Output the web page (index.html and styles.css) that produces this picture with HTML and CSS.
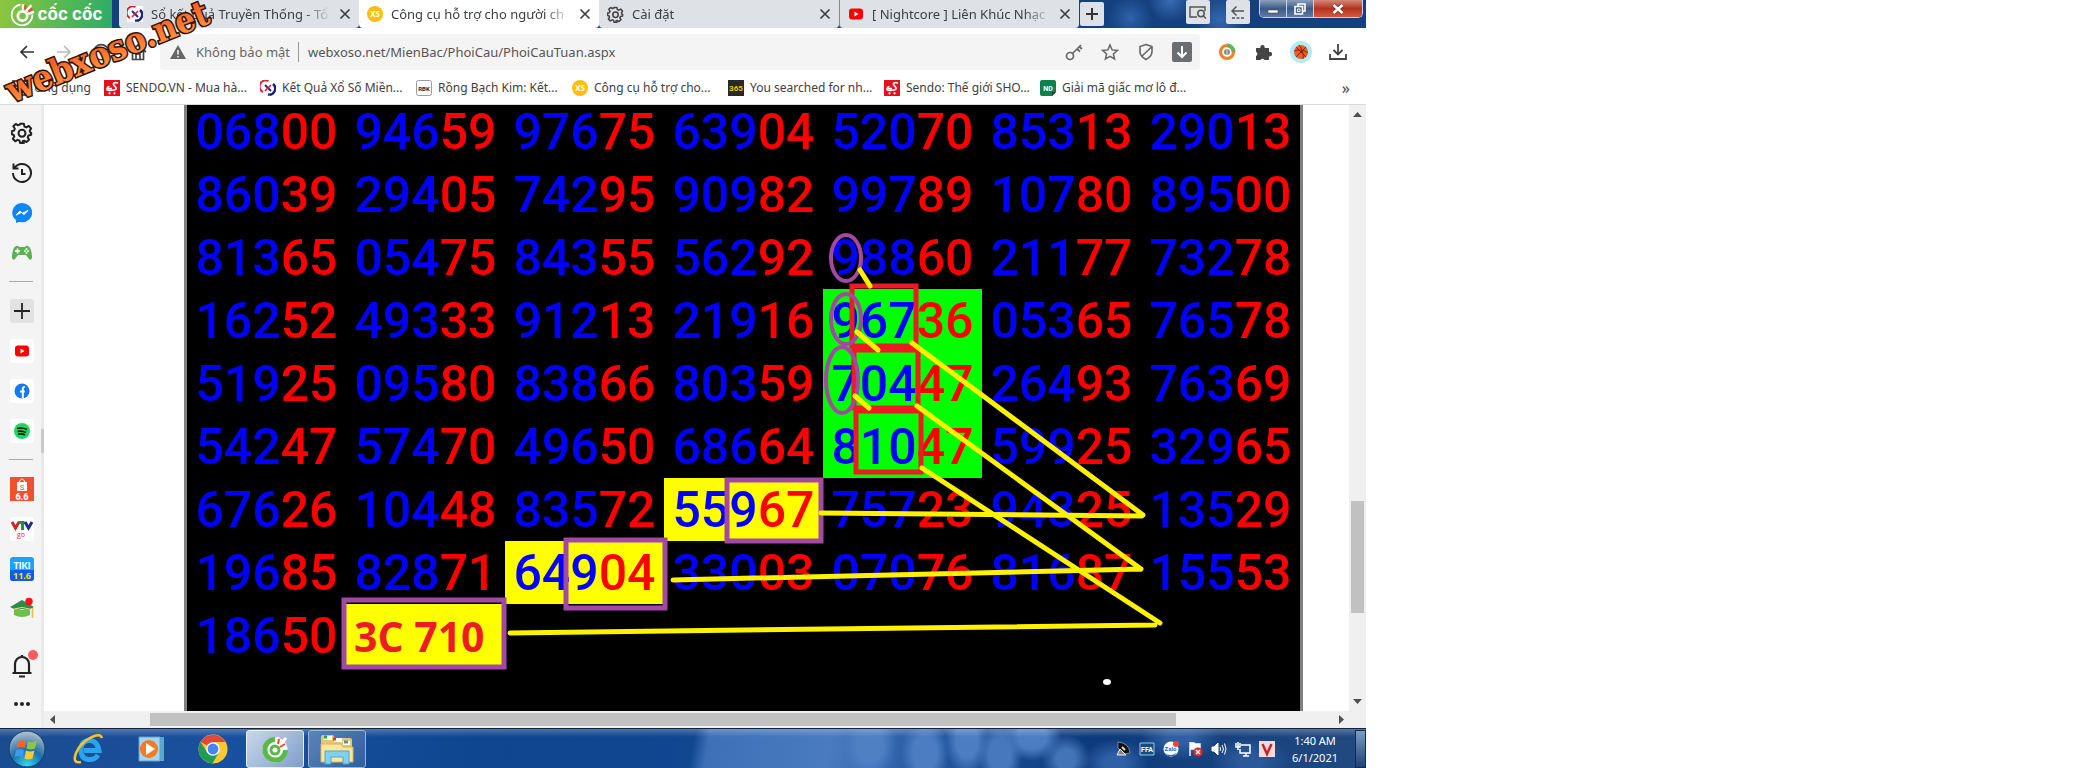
FILE: index.html
```html
<!DOCTYPE html>
<html lang="vi">
<head>
    <meta charset="UTF-8">
    <meta name="viewport" content="width=device-width, initial-scale=1.0">
    <title>Công cụ hỗ trợ cho người chơi</title>
    <link rel="stylesheet" href="styles.css">
</head>
<body>
    <!-- Shared icons -->
    <svg class="sprite" aria-hidden="true">
        <symbol id="i-close" viewBox="0 0 12 12"><path d="M1.500 1.500l9 9M10.500 1.500l-9 9" fill="none" stroke="#3c4043" stroke-width="1.700"/></symbol>
        <symbol id="i-gear" viewBox="0 0 24 24"><path d="M10 2h4l.7 3 2 .9 2.700-1.600 2.500 2.800-1.500 2.500.8 2 .8.400V14l-3 .8-.8 1.900 1.500 2.700-2.800 2.500-2.600-1.500-1.600.6L14 23h-4l-.8-2.700-1.900-.8-2.700 1.500-2.600-2.700 1.600-2.500-.8-1.900-2-.6V10l2.500-.6.9-2.100L2.500 4.600l2.700-2.500 2.500 1.500 1.800-.7z" fill="none" stroke="currentColor" stroke-width="2.200" stroke-linejoin="round"/><circle cx="12" cy="12.300" r="3.800" fill="none" stroke="currentColor" stroke-width="2.200"/></symbol>
        <symbol id="i-kq" viewBox="0 0 16 16"><path d="M8.500 1A6 6 0 1 0 3 12" fill="none" stroke="#e2202c" stroke-width="2"/><path d="M8 14.500A6 6 0 0 0 13 4" fill="none" stroke="#20207c" stroke-width="2.400"/><path d="M5 5l6 6" stroke="#20207c" stroke-width="1.800"/><path d="M11 5l-6 6" stroke="#e2202c" stroke-width="1.600"/></symbol>
        <symbol id="i-xs" viewBox="0 0 16 16"><circle cx="8" cy="8" r="8" fill="#ffbe0b"/><text x="8" y="11" text-anchor="middle" font-family="Open Sans, sans-serif" font-weight="700" font-size="8" fill="#fff">XS</text></symbol>
        <symbol id="i-yt" viewBox="0 0 16 16"><rect x="1" y="2.500" width="14" height="11" rx="3" fill="#f00"/><path d="M6.500 5.500v5l4-2.500z" fill="#fff"/></symbol>
        <symbol id="i-sendo" viewBox="0 0 16 16"><path d="M0 0h16v16H0z" fill="#e5101d"/><path d="M14 3c-3-1-5 0-4.500 1.500S13 7 12 9c-1 1.500-3 1.500-8 1.300C2 10 3 6.500 5.500 6.500M4 8.500h4" fill="none" stroke="#fff" stroke-width="1.600"/><circle cx="5.500" cy="13.300" r="1.100" fill="#fff"/><circle cx="10.500" cy="13.300" r="1.100" fill="#fff"/></symbol>
        <symbol id="i-coc" viewBox="0 0 24 24"><path d="M10 2.500A10 10 0 1 0 21.500 12" fill="none" stroke="currentColor" stroke-width="1.600"/><circle cx="12" cy="13.500" r="4.500" fill="none" stroke="currentColor" stroke-width="2.600"/><path d="M12.500 7.500V2M15.500 9l5-6M17.500 11.500l5.500-2" stroke="currentColor" stroke-width="2.400"/><path d="M15 3l-.8 4M21.500 6l-3.700 3" stroke="#f0492e" stroke-width="2"/></symbol>
    </svg>

    <div class="desktop">
        <!-- Tabs -->
        <header class="tab-bar">
            <button class="brand"><svg width="25" height="25"><use href="#i-coc"/></svg>cốc cốc</button>
            <div class="tab">
                <svg width="16" height="16"><rect width="16" height="16" fill="#fff"/><use href="#i-kq"/></svg>
                <a href="#">Sổ kết quả Truyền Thống - Tổ</a>
                <button aria-label="Đóng"><svg width="12" height="12"><use href="#i-close"/></svg></button>
            </div>
            <div class="tab tab-active">
                <svg width="16" height="16"><use href="#i-xs"/></svg>
                <a href="#">Công cụ hỗ trợ cho người ch</a>
                <button aria-label="Đóng"><svg width="12" height="12"><use href="#i-close"/></svg></button>
            </div>
            <div class="tab">
                <svg class="dark" width="17" height="17"><use href="#i-gear"/></svg>
                <a href="#">Cài đặt</a>
                <button aria-label="Đóng"><svg width="12" height="12"><use href="#i-close"/></svg></button>
            </div>
            <div class="tab tab-split">
                <svg width="16" height="16"><use href="#i-yt"/></svg>
                <a href="#">[ Nightcore ] Liên Khúc Nhạc</a>
                <button aria-label="Đóng"><svg width="12" height="12"><use href="#i-close"/></svg></button>
            </div>
            <button class="strip-btn new-tab" aria-label="Thẻ mới"><svg width="14" height="14"><path d="M7 1v12M1 7h12" stroke="#333" stroke-width="2"/></svg></button>
            <div class="strip-tools">
                <button class="strip-btn" aria-label="Tìm thẻ"><svg width="18" height="14" fill="none" stroke="#555" stroke-width="1.500"><path d="M8 12H1V2h15v4"/><circle cx="12" cy="8.500" r="3.200"/><path d="M14.500 11l2.500 2.500"/></svg></button>
                <button class="strip-btn" aria-label="Quay lại"><svg width="14" height="14" fill="none" stroke="#555" stroke-width="1.500"><path d="M13 6H1M5.500 1.500L1 6l4.500 4.500"/><path d="M1 13h12" stroke-dasharray="3 1.500"/></svg></button>
            </div>
            <div class="win-ctl">
                <button aria-label="Thu nhỏ"><svg width="12" height="12"><rect x="1" y="7" width="10" height="3" fill="#fff" stroke="#444" stroke-width=".6"/></svg></button>
                <button aria-label="Khôi phục"><svg width="12" height="12" fill="none" stroke="#fff" stroke-width="1.600"><path d="M4 3V1h7v7H9"/><path d="M1 3.500h7.500V11H1z"/><path d="M3.500 6h2.500v2.500H3.500z" stroke-width="1"/></svg></button>
                <button class="win-close" aria-label="Đóng"><svg width="12" height="12"><path d="M1.500 2l9 8M10.500 2l-9 8" stroke="#633" stroke-width="4"/><path d="M1.500 2l9 8M10.500 2l-9 8" stroke="#fff" stroke-width="2.600"/></svg></button>
            </div>
        </header>

        <!-- Address bar -->
        <nav class="toolbar">
            <div class="nav-btns">
                <button aria-label="Lùi"><svg width="16" height="16" fill="none" stroke="#333" stroke-width="1.700"><path d="M15 8H2M8 2L2 8l6 6"/></svg></button>
                <button aria-label="Tiến"><svg width="16" height="16" fill="none" stroke="#bbb" stroke-width="1.700"><path d="M1 8h13M8 2l6 6-6 6"/></svg></button>
                <button aria-label="Tải lại"><svg width="18" height="18" fill="none" stroke="#444" stroke-width="1.700"><path d="M16 6A7.500 7.500 0 1 0 16.500 11M16.500 1v5.500H11"/></svg></button>
                <button aria-label="Trang chủ"><svg width="18" height="18" fill="none" stroke="#444" stroke-width="1.700"><path d="M1 9l8-7 8 7M3.500 8v8.500h11V8M7 16v-5h4v5"/></svg></button>
            </div>
            <div class="address">
                <svg width="16" height="14"><path d="M8 0l8 14H0z" fill="#666"/><path d="M8 5v4.500M8 11v1.500" stroke="#f4f4f4" stroke-width="1.600"/></svg>
                <label for="url">Không bảo mật</label>
                <input id="url" type="text" value="webxoso.net/MienBac/PhoiCau/PhoiCauTuan.aspx">
                <button aria-label="Mật khẩu"><svg width="18" height="18" fill="none" stroke="#666" stroke-width="1.700"><circle cx="5" cy="13" r="3.500"/><path d="M7.500 10.500L16 2M12 6l3 2.500M14 3.500L17 6"/></svg></button>
                <button aria-label="Đánh dấu"><svg width="18" height="18" fill="none" stroke="#666" stroke-width="1.500"><path d="M9 2l2.100 4.900 5.200.5-3.900 3.500 1.200 5.100L9 13.300 4.400 16l1.200-5.100L1.700 7.400l5.200-.5z"/></svg></button>
                <button aria-label="Chặn quảng cáo"><svg width="18" height="18" fill="none" stroke="#666" stroke-width="1.600"><path d="M9 1.500l6 2v5c0 4-3 6.500-6 8-3-1.500-6-4-6-8v-5zM4.500 13.500L14.500 4"/></svg></button>
                <button aria-label="Tải video"><svg width="20" height="20"><rect width="20" height="20" rx="2" fill="#6b6e70"/><path d="M10 4v11M5.500 10.500L10 15l4.500-4.500" fill="none" stroke="#fff" stroke-width="2"/></svg></button>
            </div>
            <div class="ext-btns">
                <button aria-label="Tiết kiệm"><svg width="18" height="18" fill="none"><circle cx="9" cy="9" r="6.500" stroke="#f5821f" stroke-width="3.200"/><path d="M9 2.500a6.500 6.500 0 0 1 6.500 6.500" stroke="#5cb85c" stroke-width="4"/><circle cx="9" cy="9" r="3" fill="#888"/><path d="M9 6v6" stroke="#ddd"/></svg></button>
                <button aria-label="Tiện ích"><svg width="18" height="18"><path d="M1 5h4.500a2.200 2.200 0 1 1 4 0H14v4a2.300 2.300 0 1 1 0 4.300V17H9.500a2.200 2.200 0 0 0-4 0H1v-4a2.300 2.300 0 0 0 0-4.200z" fill="#444"/></svg></button>
                <button aria-label="Hồ sơ"><svg width="22" height="22"><circle cx="11" cy="11" r="11" fill="#b2ebf2"/><circle cx="11" cy="11" r="7" fill="#f05a28"/><path d="M6 6l10 10M16 6L6 16M9 4c3 4 5 9 4 14M4 10c5-2 10-1 14 2" fill="none" stroke="#6b2a14" stroke-width=".9"/></svg></button>
                <button aria-label="Tải xuống"><svg width="18" height="18" fill="none" stroke="#444" stroke-width="1.800"><path d="M9 1v10M4.500 7L9 11.500 13.500 7M1 11v5h16v-5"/></svg></button>
            </div>
        </nav>

        <!-- Bookmarks -->
        <nav class="bookmarks">
            <a class="apps" href="#"><svg width="16" height="16" fill="none" stroke="#555" stroke-width="1.800"><path d="M1 1h5v5H1zM10 1h5v5h-5zM1 10h5v5H1zM10 10h5v5h-5z"/></svg>Ứng dụng</a>
            <a href="#"><svg width="16" height="16"><use href="#i-sendo"/></svg>SENDO.VN - Mua hà...</a>
            <a href="#"><svg width="16" height="16"><use href="#i-kq"/></svg>Kết Quả Xổ Số Miền...</a>
            <a href="#"><svg width="16" height="16"><rect x=".5" y=".5" width="15" height="15" rx="2" fill="#fff" stroke="#99a"/><text x="8" y="11" text-anchor="middle" font-family="Roboto, sans-serif" font-weight="700" font-size="6" fill="#224">RBK</text></svg>Rồng Bạch Kim: Kết...</a>
            <a href="#"><svg width="16" height="16"><use href="#i-xs"/></svg>Công cụ hỗ trợ cho...</a>
            <a href="#"><svg width="16" height="16"><path d="M0 0h16v16H0z" fill="#292929"/><text x="8" y="11" text-anchor="middle" font-family="Roboto, sans-serif" font-weight="700" font-size="8" fill="#f4c400">365</text></svg>You searched for nh...</a>
            <a href="#"><svg width="16" height="16"><use href="#i-sendo"/></svg>Sendo: Thế giới SHO...</a>
            <a href="#"><svg width="16" height="16"><path d="M2 0h12q2 0 2 2v10l-4 4H2q-2 0-2-2V2q0-2 2-2z" fill="#0d8050"/><path d="M16 12h-4v4z" fill="#064d30"/><text x="8" y="11" text-anchor="middle" font-family="Roboto, sans-serif" font-weight="700" font-size="7" fill="#fff">ND</text></svg>Giải mã giấc mơ lô đ...</a>
            <button class="more">»</button>
        </nav>

        <main class="content">
            <!-- Side bar -->
            <aside class="sidebar">
                <button aria-label="Cài đặt"><svg width="22" height="22"><use href="#i-gear"/></svg></button>
                <button aria-label="Lịch sử"><svg width="22" height="22" fill="none" stroke="#222" stroke-width="2"><path d="M3.500 6A9 9 0 1 1 2 11M2.500 1.500v5h5M11 7v5h3.500"/></svg></button>
                <button aria-label="Messenger"><svg width="20" height="20"><path d="M10 0a10 9.500 0 0 1 0 19.300l-3-.4-3 1.100v-3A10 9.600 0 0 1 10 0z" fill="#0a86ff"/><path d="M4 12l4-4 2.500 2.200L16 7.500l-4 4.200L9.500 9.500z" fill="#fff" stroke="#fff"/></svg></button>
                <button aria-label="Trò chơi"><svg width="22" height="16"><path d="M5 1q2-1 3 1h6q1-2 3-1 4 2 4 12-1 3-3 1l-3-4H7l-3 4q-2 2-3-1Q1 3 5 1z" fill="#5bb154"/><path d="M4 6h5M6.500 3.500v5" stroke="#fff" stroke-width="1.600"/><circle cx="14" cy="6" r="1" fill="#fff"/><circle cx="17" cy="6" r="1" fill="#fff"/><circle cx="15.500" cy="8" r="1" fill="#fff"/><circle cx="15.500" cy="4" r="1" fill="#fff"/></svg></button>
                <hr>
                <button aria-label="Thêm"><svg width="24" height="24"><rect width="24" height="24" rx="3" fill="#e2e2e2"/><path d="M12 4v16M4 12h16" stroke="#222" stroke-width="1.800"/></svg></button>
                <button aria-label="YouTube"><svg width="24" height="24"><rect width="24" height="24" rx="3" fill="#fff"/><rect x="5" y="6.500" width="14" height="11" rx="3" fill="#f00"/><path d="M10.500 9.500v5l4-2.500z" fill="#fff"/></svg></button>
                <button aria-label="Facebook"><svg width="24" height="24"><rect width="24" height="24" rx="3" fill="#fff"/><circle cx="12" cy="12" r="7.500" fill="#1877f2"/><path d="M12.800 19.500V10q0-2 2-1.900M10 12.500h4.700" fill="none" stroke="#fff" stroke-width="2"/></svg></button>
                <button aria-label="Spotify"><svg width="24" height="24"><rect width="24" height="24" rx="3" fill="#fff"/><circle cx="12" cy="12" r="8" fill="#1ed760"/><path d="M7 9.500q5-1.500 10 1M7.500 12.500q4.500-1.200 8.500 1M8 15.200q4-1 7 .8" fill="none" stroke="#111" stroke-width="1.600"/></svg></button>
                <hr>
                <button aria-label="Shopee"><svg width="24" height="24"><path d="M0 0h24v24H0z" fill="#f1502f"/><path d="M7 5h10v9H7z" fill="#fff"/><path d="M9 5q3-6 6 0" fill="none" stroke="#fff"/><text x="12" y="12.500" text-anchor="middle" font-family="Roboto, sans-serif" font-size="8" fill="#f1502f">S</text><text x="12" y="22.500" text-anchor="middle" font-family="Roboto, sans-serif" font-weight="900" font-size="9" fill="#fff">6.6</text></svg></button>
                <button aria-label="VTV go"><svg width="24" height="24" fill="none"><rect width="24" height="24" rx="3" fill="#fff"/><path d="M2 5l3.500 6L9 5" stroke="#d81f2a" stroke-width="3"/><path d="M8.500 5.500h6M12.500 5v8" stroke="#0a9b45" stroke-width="3"/><path d="M15 5l3.500 6L22 5" stroke="#262a8c" stroke-width="3"/><text x="11" y="20" text-anchor="middle" font-family="Open Sans, sans-serif" font-size="7" fill="#d81f2a">go</text></svg></button>
                <button aria-label="Tiki"><svg width="24" height="24"><rect width="24" height="24" rx="3" fill="#1aa3fb"/><path d="M0 13h24v8q0 3-3 3H3q-3 0-3-3z" fill="#0d5cf0"/><text x="12" y="12" text-anchor="middle" font-family="Lato, sans-serif" font-weight="900" font-size="9" fill="#fff">TIKI</text><text x="12" y="22" text-anchor="middle" font-family="Open Sans, sans-serif" font-weight="700" font-size="9" fill="#ffe100">11.6</text></svg></button>
                <button aria-label="Học tập"><svg width="24" height="24"><path d="M4 10l8 3 8-3v8q-8 4-16 0z" fill="#6cc04a"/><path d="M0 10l12-7 12 7-4 2H4z" fill="#2e8b4a"/><path d="M4 12q8-3 16 0" fill="none" stroke="#f0d98a"/><path d="M22.500 11v10" stroke="#eebb4d" stroke-width="1.600"/><circle cx="19" cy="4.500" r="3.700" fill="#fb1414"/></svg></button>
                <button class="bell" aria-label="Thông báo"><svg width="32" height="30" fill="none"><path d="M9 23V15a7 7 0 0 1 14 0v8M6.500 24h19M13 27.500h6M16 6v3" stroke="#222" stroke-width="2.200"/><circle cx="27" cy="6" r="5" fill="#ff5b5f"/></svg></button>
                <button class="dots" aria-label="Khác"><svg width="16" height="4" fill="#222"><circle cx="2" cy="2" r="2"/><circle cx="8" cy="2" r="2"/><circle cx="14" cy="2" r="2"/></svg></button>
                <span class="grip"></span>
            </aside>

            <div class="viewport">
                <div class="page">
                    <div class="board">
                        <table class="results">
                            <tr><td>068<b>00</b></td><td>946<b>59</b></td><td>976<b>75</b></td><td>639<b>04</b></td><td>520<b>70</b></td><td>853<b>13</b></td><td>290<b>13</b></td></tr>
                            <tr><td>860<b>39</b></td><td>294<b>05</b></td><td>742<b>95</b></td><td>909<b>82</b></td><td>997<b>89</b></td><td>107<b>80</b></td><td>895<b>00</b></td></tr>
                            <tr><td>813<b>65</b></td><td>054<b>75</b></td><td>843<b>55</b></td><td>562<b>92</b></td><td>988<b>60</b></td><td>211<b>77</b></td><td>732<b>78</b></td></tr>
                            <tr><td>162<b>52</b></td><td>493<b>33</b></td><td>912<b>13</b></td><td>219<b>16</b></td><td class="green">967<b>36</b></td><td>053<b>65</b></td><td>765<b>78</b></td></tr>
                            <tr><td>519<b>25</b></td><td>095<b>80</b></td><td>838<b>66</b></td><td>803<b>59</b></td><td class="green">704<b>47</b></td><td>264<b>93</b></td><td>763<b>69</b></td></tr>
                            <tr><td>542<b>47</b></td><td>574<b>70</b></td><td>496<b>50</b></td><td>686<b>64</b></td><td class="green">810<b>47</b></td><td>599<b>25</b></td><td>329<b>65</b></td></tr>
                            <tr><td>676<b>26</b></td><td>104<b>48</b></td><td>835<b>72</b></td><td class="yellow">559<b>67</b></td><td>757<b>23</b></td><td>943<b>25</b></td><td>135<b>29</b></td></tr>
                            <tr><td>196<b>85</b></td><td>828<b>71</b></td><td class="yellow">649<b>04</b></td><td>330<b>03</b></td><td>070<b>76</b></td><td>816<b>87</b></td><td>155<b>53</b></td></tr>
                            <tr><td>186<b>50</b></td><td class="yellow pick">3C 710</td><td></td><td></td><td></td><td></td><td></td></tr>
                        </table>
                        <!-- Hand-drawn marks over the numbers -->
                        <svg class="marks" viewBox="184 105 1119 606" width="1119" height="606" fill="none">
                            <g stroke="#ed1c24" stroke-width="5">
                                <rect x="852" y="286" width="64" height="60"/>
                                <rect x="854" y="350" width="64" height="58"/>
                                <rect x="856" y="411" width="65" height="61"/>
                            </g>
                            <g stroke="#a349a4" stroke-width="5">
                                <ellipse cx="846" cy="258" rx="15" ry="23" stroke-width="4"/>
                                <ellipse cx="846" cy="319" rx="15" ry="25" stroke-width="4"/>
                                <ellipse cx="842" cy="380" rx="16" ry="33" stroke-width="4"/>
                                <rect x="727" y="480" width="94" height="61"/>
                                <rect x="566" y="540" width="99" height="68"/>
                                <rect x="344" y="600" width="160" height="67"/>
                            </g>
                            <g stroke="#fff200" stroke-width="5" stroke-linecap="round">
                                <path d="M860 270l10 16M857 332l21 18M855 396l14 12"/>
                                <path d="M912 343l231 172M821 513l321 3"/>
                                <path d="M917 406l224 163M673 580l468-11"/>
                                <path d="M922 468l238 155M510 633l645-8"/>
                            </g>
                            <ellipse cx="1107" cy="682" rx="4" ry="3" fill="#fff"/>
                        </svg>
                    </div>
                    <div class="vscroll"><svg width="9" height="5"><path d="M0 5l4.500-5L9 5z" fill="#505050"/></svg><span class="vthumb"></span><svg width="9" height="5"><path d="M0 0h9L4.500 5z" fill="#505050"/></svg></div>
                </div>
                <div class="hscroll"><svg width="5" height="9"><path d="M5 0v9L0 4.500z" fill="#505050"/></svg><span class="hthumb"></span><svg width="5" height="9"><path d="M0 0v9l5-4.500z" fill="#505050"/></svg></div>
            </div>
        </main>

        <!-- Taskbar -->
        <footer class="taskbar">
            <button class="start" aria-label="Start"><svg width="38" height="38"><defs><radialGradient id="orb" cx=".5" cy=".95" r=".9"><stop offset="0" stop-color="#35d6f5"/><stop offset=".5" stop-color="#1c6fa8"/><stop offset="1" stop-color="#a9bccb"/></radialGradient></defs><circle cx="19" cy="19" r="18" fill="url(#orb)" stroke="#123c68"/><path d="M10 12q4-3 8-1l-1.500 7q-4-2-8 0z" fill="#f0652b"/><path d="M20 11.500q4 2 9-1l-2 8q-4 2-8.500 0z" fill="#8cc63f"/><path d="M8 20q4-2 8 0l-1.500 7q-4-2-8 0z" fill="#3d9bea"/><path d="M18 20.500q4 2 8.500 0l-2 8q-4 2-8 0z" fill="#fdc82f"/></svg></button>
            <button class="launch" aria-label="Internet Explorer"><svg width="34" height="32" fill="none"><path d="M26 22q-3 5-9 4.500Q9 26 9 17T17 7.500t10 10H12" stroke="#2aa4ec" stroke-width="5"/><path d="M30 5q-2-5-10-1Q9 9 4 20q-4 11 5 9" stroke="#f7c22d" stroke-width="2.600"/></svg></button>
            <button class="launch" aria-label="Media Player"><svg width="28" height="28"><path d="M4 2h23v24H4z" fill="#5ba7cf"/><path d="M2 2h21v24H2z" fill="#a5d5ee" stroke="#5fa3c8"/><circle cx="12" cy="14" r="9" fill="#f47b20"/><path d="M9 8v12l9-6z" fill="#fff"/></svg></button>
            <button class="launch" aria-label="Chrome"><svg width="30" height="30"><circle cx="15" cy="15" r="14.500" fill="#fcc934"/><path d="M15 15L2.500 7.700A14.500 14.500 0 0 1 27.500 8H15z" fill="#dd4b3e"/><path d="M2.500 7.700A14.500 14.500 0 0 0 14.500 29.500L21 18 15 15 9 18z" fill="#1f9d58"/><circle cx="15" cy="15" r="6.800" fill="#fff"/><circle cx="15" cy="15" r="5.400" fill="#4285f4"/></svg></button>
            <button class="task task-on" aria-label="Cốc Cốc"><svg width="28" height="28" fill="none"><circle cx="14" cy="15" r="12.500" fill="#fff"/><path d="M14 4.500A10.300 10.300 0 1 0 24.500 15" stroke="#59b947" stroke-width="5"/><circle cx="14" cy="15" r="4" stroke="#59b947" stroke-width="3"/><path d="M16 10l1-8M18 11l7-8" stroke="#fff" stroke-width="3"/><path d="M17 9l1-5M19 12l5-3" stroke="#f0492e" stroke-width="2"/></svg></button>
            <button class="task" aria-label="Explorer"><svg width="34" height="32"><path d="M1 4q0-2 2-2h10l2 3h15q2 0 2 2v22H1z" fill="#e9c66a"/><path d="M4 5h8M14 7h8M23 10h7" stroke="#fff" stroke-width="4"/><path d="M1 11h20l2 3h10v15H1z" fill="#f9e7a0" stroke="#d9b456"/><path d="M4 4h3" stroke="#24a836" stroke-width="3"/><path d="M13 6h3" stroke="#d8392b" stroke-width="3"/><path d="M24 9h4" stroke="#3399dd" stroke-width="3"/><path d="M5 31V18h24v13h-6v-7H11v7z" fill="#83d0ee" stroke="#4ba7d1"/></svg></button>
            <div class="tray">
                <svg width="16" height="16"><path d="M3 1q11 1 12 11l-6 1-6-6z" fill="#111" stroke="#bbb" stroke-width=".6"/><path d="M2 14l3-6 6 6z" stroke="#eee" fill="#888"/><path d="M7 6l3 3" stroke="#ddd" stroke-width="2"/></svg>
                <svg width="16" height="16"><path d="M1 2h14v12H1z" fill="#1a4a7c" stroke="#8bd0f0"/><text x="8" y="11" text-anchor="middle" font-family="Roboto, sans-serif" font-weight="700" font-size="7" fill="#fff">FFA</text></svg>
                <svg width="16" height="16"><circle cx="8" cy="8" r="7.500" fill="#fff"/><path d="M2 12q6 4 11 0l-1 3H5z" fill="#2676e8"/><text x="7.500" y="10" text-anchor="middle" font-family="Roboto, sans-serif" font-weight="700" font-size="6" fill="#1567ea">Zalo</text><circle cx="13" cy="3" r="3" fill="#f44336"/></svg>
                <svg width="16" height="16"><path d="M3 1v14M3 2h4l1 1h5v6H8L7 8H3z" fill="#fff" stroke="#fff" stroke-width="1.400"/><circle cx="11" cy="11" r="4.600" fill="#dc2a25"/><path d="M9 9l4 4M13 9l-4 4" stroke="#fff" stroke-width="1.500"/></svg>
                <svg width="16" height="16" fill="none" stroke="#fff"><path d="M1 6h2l4-4v12l-4-4H1z" fill="#fff"/><path d="M9 6q1 2 0 4M11 4q3 4 0 8M13.500 2.500q3 5.500 0 11"/></svg>
                <svg width="16" height="16" fill="none" stroke="#fff" stroke-width="1.500"><path d="M6 4h9v8H5V8M8 15h6M11 12v3M1 2v4h4V2M3 1v8"/></svg>
                <svg width="16" height="16"><path d="M0 0h16v16H0z" fill="#f7d9d9"/><path d="M3.500 3L8 13l4.500-10" fill="none" stroke="#c8202a" stroke-width="2.400"/></svg>
            </div>
            <div class="clock"><span>1:40 AM</span><span>6/1/2021</span></div>
            <button class="peek" aria-label="Desktop"></button>
        </footer>

        <!-- Site watermark -->
        <svg class="watermark" width="230" height="120" aria-label="webxoso.net">
            <defs><linearGradient id="fire" x1="0" y1="0" x2="0" y2="1"><stop offset=".2" stop-color="#ff5a1f"/><stop offset="1" stop-color="#ffa04a"/></linearGradient></defs>
            <text x="12" y="103" transform="rotate(-22 12 103)" fill="url(#fire)">webxoso.net</text>
        </svg>
    </div>
</body>
</html>
```

FILE: styles.css
```css
* {
    box-sizing: border-box;
}

body {
    margin: 0;
    background-color: #fff;
    color: #3c4043;
    font-family: "Noto Sans", "Open Sans", sans-serif;
    font-size: 13px;
}

button {
    display: flex;
    align-items: center;
    justify-content: center;
    padding: 0;
    border: none;
    background: none;
    color: inherit;
    font: inherit;
    cursor: pointer;
}

a {
    color: inherit;
    text-decoration: none;
}

svg {
    flex-shrink: 0;
}

.sprite {
    position: absolute;
    width: 0;
    height: 0;
}

.desktop {
    position: relative;
    display: flex;
    flex-direction: column;
    width: 66%;
    max-width: 1366px;
    height: 100vh;
    overflow: hidden;
}

/* Tabs */
.tab-bar {
    display: flex;
    height: 28px;
    background:
        radial-gradient(circle at 1130px 18px, #2f62aa 0, transparent 22px),
        radial-gradient(circle at 1170px 0, #3a6db4 0, transparent 22px),
        radial-gradient(circle at 1220px 20px, #3567b0 0, transparent 26px),
        #14407f;
}

.brand {
    gap: 3px;
    width: 112px;
    margin-right: 7px;
    background: linear-gradient(100deg, #8dc63f, #2aac68);
    color: #fff;
    font-family: Inter, sans-serif;
    font-size: 17px;
    font-weight: 700;
}

.tab {
    display: flex;
    flex: 0 1 240px;
    align-items: center;
    gap: 8px;
    min-width: 0;
    padding: 0 8px;
    background-color: #dee1e6;
    border-radius: 0 0 4px 4px;
}

.tab a {
    flex: 1;
    overflow: hidden;
    white-space: nowrap;
    -webkit-mask-image: linear-gradient(90deg, #000 85%, transparent);
    mask-image: linear-gradient(90deg, #000 85%, transparent);
}

.tab-active {
    background-color: #fff;
}

.tab-split {
    border-left: 1px solid #888;
}

.dark {
    color: #444;
}

.strip-btn {
    width: 24px;
    height: 24px;
    background-color: #dee1e6;
    border-radius: 2px;
}

.new-tab {
    margin: 2px 0 0 1px;
}

.strip-tools {
    display: flex;
    gap: 16px;
    margin-left: auto;
    margin-right: 9px;
}

.win-ctl {
    display: flex;
    height: 18px;
    margin-right: 3px;
    border: 1px solid #c5d3e4;
    border-top: none;
    border-radius: 0 0 5px 5px;
    overflow: hidden;
}

.win-ctl button {
    width: 27px;
    background: linear-gradient(#8c9fba, #3d5a83 50%, #607ba3);
    border-right: 1px solid #c5d3e4;
}

.win-ctl .win-close {
    width: 48px;
    background: linear-gradient(#d58878, #b23520 50%, #d4583d);
    border-right: none;
}

/* Address bar */
.toolbar {
    display: flex;
    align-items: center;
    height: 48px;
    padding-left: 8px;
}

.nav-btns button,
.ext-btns button {
    width: 37px;
    height: 36px;
}

.nav-btns,
.ext-btns {
    display: flex;
}

.nav-btns {
    width: 152px;
}

.address {
    display: flex;
    flex: 1;
    align-items: center;
    height: 36px;
    padding-left: 10px;
    background-color: #f4f4f4;
    border-radius: 3px;
    color: #666;
}

.address label {
    margin: 0 8px 0 10px;
}

.address input {
    flex: 1;
    height: 20px;
    padding: 0 9px;
    border: none;
    border-left: 1px solid #999;
    outline: none;
    background: none;
    color: #555;
    font: inherit;
}

.address button {
    width: 36px;
    height: 36px;
}

.ext-btns {
    padding: 0 10px 0 8px;
}

/* Bookmarks */
.bookmarks {
    display: flex;
    align-items: center;
    height: 29px;
    padding: 0 12px 5px;
    border-bottom: 1px solid #d8dade;
    font-size: 12px;
}

.bookmarks a {
    display: flex;
    align-items: center;
    gap: 6px;
    width: 156px;
    white-space: nowrap;
}

.bookmarks .apps {
    width: 92px;
}

.more {
    margin-left: auto;
    margin-right: 4px;
    font-size: 16px;
}

/* Side bar */
.content {
    display: flex;
    flex: 1;
    min-height: 0;
}

.sidebar {
    position: relative;
    display: flex;
    flex-direction: column;
    align-items: center;
    width: 44px;
    padding-top: 8px;
    background-color: #f4f4f4;
    border-right: 3px solid #eaeaea;
    color: #222;
}

.sidebar button {
    width: 40px;
    height: 40px;
    padding-left: 3px;
}

.sidebar hr {
    width: 24px;
    margin: 8px 0 9px;
    border: none;
    border-top: 1px solid #aaa;
}

.sidebar .bell,
.sidebar .dots {
    margin-top: auto;
}

.sidebar .dots {
    margin: 0 0 4px;
}

.grip {
    position: absolute;
    top: 52%;
    right: -3px;
    width: 3px;
    height: 24px;
    background-color: #c8c8c8;
}

/* Page */
.viewport {
    display: flex;
    flex: 1;
    flex-direction: column;
    min-width: 0;
}

.page {
    display: flex;
    flex: 1;
    min-height: 0;
    padding-left: 140px;
}

.board {
    position: relative;
    overflow: hidden;
    background-color: #000;
    border: solid #808080;
    border-width: 0 3px;
}

.results {
    margin-top: -5px;
    border-collapse: collapse;
    color: #00f;
    font-family: Roboto, sans-serif;
    font-size: 50px;
    font-weight: 500;
    line-height: 63px;
    text-align: center;
}

.results td {
    width: 159px;
    height: 63px;
    padding: 2px 0 0;
    line-height: 61px;
}

.results b {
    color: #f00;
    font-weight: 500;
}

.results .green {
    background-color: #0f0;
}

.results .yellow {
    background-color: #ff0;
}

.results .pick {
    padding-left: 8px;
    color: #ed1c24;
    font-family: "Open Sans", sans-serif;
    font-size: 41px;
    font-weight: 700;
    text-align: left;
}

.marks {
    position: absolute;
    top: 0;
    left: -3px;
}

/* Scroll bars */
.vscroll,
.hscroll {
    display: flex;
    align-items: center;
    background-color: #f0f0f0;
}

.vscroll {
    flex-direction: column;
    width: 17px;
    margin-left: auto;
    padding: 7px 0;
}

.vthumb {
    width: 13px;
    height: 112px;
    margin: auto 0 86px;
    background-color: #c1c1c1;
}

.hscroll {
    height: 17px;
    padding: 0 22px 0 6px;
}

.hthumb {
    flex: 0 1 1026px;
    height: 13px;
    margin: 0 auto 0 95px;
    background-color: #c1c1c1;
}

/* Taskbar */
.taskbar {
    display: flex;
    align-items: center;
    height: 40px;
    background:
        linear-gradient(rgba(255, 255, 255, 0.25), transparent 8px),
        radial-gradient(ellipse 26px 34px at 870px 16px, #4f80c4 50%, transparent),
        radial-gradient(ellipse 24px 34px at 925px 24px, #4c7dc2 50%, transparent),
        radial-gradient(ellipse 22px 34px at 967px 12px, #4c7dc2 50%, transparent),
        radial-gradient(ellipse 22px 34px at 1000px 26px, #4778bd 50%, transparent),
        radial-gradient(ellipse 30px 24px at 1032px 8px, #4c7dc2 50%, transparent),
        radial-gradient(ellipse 24px 24px at 1066px 30px, #4474b8 40%, transparent),
        radial-gradient(ellipse 34px 24px at 1115px 34px, #2f60a6 30%, transparent),
        radial-gradient(ellipse 40px 24px at 1180px 8px, #2f5fa3 30%, transparent),
        radial-gradient(ellipse 40px 24px at 1250px 32px, #2a5899 30%, transparent),
        linear-gradient(100deg, #1b4c90 0, #1850a0 250px, #0e458e 500px, #10478f 685px, #3d70b7 700px, #4a7bc0 820px, #24569f 920px, #0c3a7c 1080px, #234b80 1366px);
    border-top: 1px solid #16243a;
}

.start {
    width: 58px;
    padding-right: 4px;
}

.launch {
    width: 62px;
}

.task {
    width: 58px;
    height: 38px;
    margin-right: 4px;
    background: linear-gradient(135deg, #5b84ba, #2f5f9f);
    border: 1px solid #9db5d3;
    border-radius: 3px;
}

.launch + .task {
    margin-left: 2px;
}

.task-on {
    background: linear-gradient(135deg, #c9d7ea, #7f9fca);
    border-color: #e8eff8;
}

.tray {
    display: flex;
    gap: 8px;
    margin-left: auto;
}

.clock {
    display: flex;
    flex-direction: column;
    align-items: center;
    width: 80px;
    color: #fff;
    font-size: 11px;
    line-height: 17px;
}

.peek {
    width: 11px;
    height: 38px;
    background: linear-gradient(#7d9cc3, #1c4177);
    border: 1px solid #0f2c55;
}

.watermark {
    position: absolute;
    top: 0;
    left: 0;
    font-family: "DejaVu Serif Condensed", "DejaVu Serif", serif;
    font-size: 35px;
    font-weight: 700;
    stroke: #2a1408;
    stroke-width: 3px;
    paint-order: stroke;
    pointer-events: none;
}
```
